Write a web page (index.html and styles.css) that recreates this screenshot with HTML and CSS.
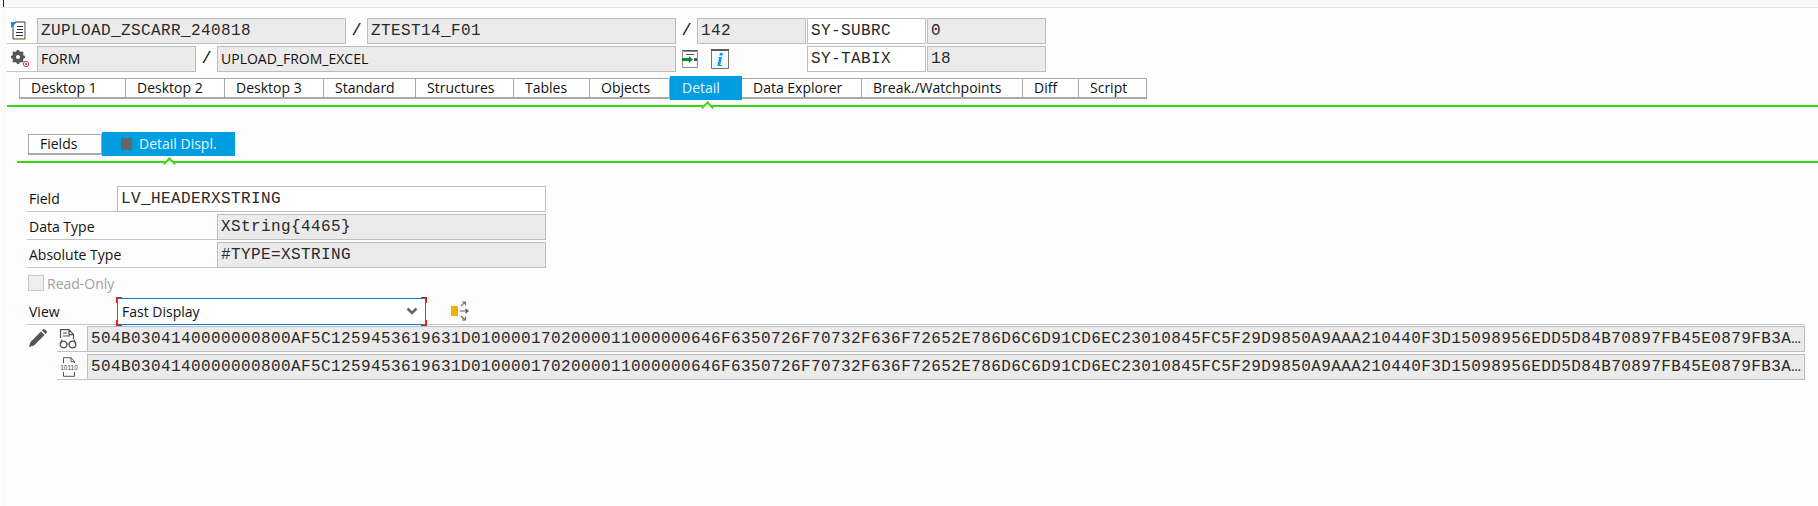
FILE: index.html
```html
<!DOCTYPE html>
<html lang="en">
<head>
<meta charset="utf-8">
<title>ABAP Debugger - Detail Display</title>
<link rel="stylesheet" href="styles.css">
</head>
<body>
<div class="strip"><span class="strip-mark"></span></div>
<main class="app">
  <div class="info-row">
    <div class="lead">
      <svg width="18" height="20" viewBox="0 0 18 20"><path d="M5 1h10v17H3V3z" fill="#fff" stroke="#3c3c3c"/><path d="M1 1h6L1 7z" fill="#1e88d8"/><path d="M7 5h6v1H7zM7 8h6v1H7zM6 11h7v1H6zM6 14h7v1H6z" fill="#333"/><path d="M3 18h12v1H3zM15 3h1v15h-1z" fill="#c9a57c"/></svg>
    </div>
    <div class="field w309 mono">ZUPLOAD_ZSCARR_240818</div>
    <div class="slash">/</div>
    <div class="field w309 mono">ZTEST14_F01</div>
    <div class="slash">/</div>
    <div class="field w109 mono">142</div>
    <div class="field white w119 gap-l mono">SY-SUBRC</div>
    <div class="field w119 gap-l mono">0</div>
  </div>
  <div class="info-row">
    <div class="lead">
      <svg width="20" height="20" viewBox="0 0 20 20"><circle cx="8" cy="8" r="4.2" fill="none" stroke="#555" stroke-width="3.4"/><path d="M8 1v14M1 8h14M3 3l10 10M13 3 3 13" stroke="#555" stroke-width="2.4"/><circle cx="8" cy="8" r="2" fill="#fff"/><circle cx="16" cy="15" r="2.6" fill="#fff" stroke="#e0303a"/><circle cx="16" cy="15" r="1" fill="#e0303a"/></svg>
    </div>
    <div class="field w159 sans">FORM</div>
    <div class="slash">/</div>
    <div class="field w459 sans">UPLOAD_FROM_EXCEL</div>
    <div class="tools">
      <svg width="18" height="20" viewBox="0 0 18 20"><path d="M1.500 2.500h15v16h-15z" fill="#fff" stroke="#9a8f84"/><path d="M1 1h16v1H1zM5 5h8v1H5z" fill="#555"/><path d="M1 9h7V7l4 3.500-4 3.500v-2H1z" fill="#0a8a3c"/><path d="M13 9h3v3h-3z" fill="#555"/></svg>
      <svg width="18" height="20" viewBox="0 0 18 20"><path d="M.5 1.500h17v18H.5z" fill="#f2f8fd" stroke="#7d7068"/><path d="M0 0h18v2H0z" fill="#5d5a58"/><path d="M9 4h3l-.5 2.500h-3zM8 8h3l-1.700 8H11v1H6.300l1.900-8H7z" fill="#0a9ae6"/></svg>
    </div>
    <div class="field white w119 mono">SY-TABIX</div>
    <div class="field w119 gap-l mono">18</div>
  </div>

  <nav class="tabs">
    <span class="tab t107">Desktop 1</span>
    <span class="tab t99">Desktop 2</span>
    <span class="tab t99">Desktop 3</span>
    <span class="tab t92">Standard</span>
    <span class="tab t98">Structures</span>
    <span class="tab t76">Tables</span>
    <span class="tab t80">Objects</span>
    <span class="tab active t72">Detail</span>
    <span class="tab t120">Data Explorer</span>
    <span class="tab t161">Break./Watchpoints</span>
    <span class="tab t56">Diff</span>
    <span class="tab t68">Script</span>
  </nav>

  <section class="detail">
    <nav class="tabs sub">
      <span class="tab t74">Fields</span>
      <span class="tab active t133"><i class="stop"></i>Detail Displ.</span>
    </nav>

    <div class="form">
      <div class="form-row">
        <label class="label l90">Field</label>
        <div class="field white grow mono">LV_HEADERXSTRING</div>
      </div>
      <div class="form-row">
        <label class="label l190">Data Type</label>
        <div class="field grow mono">XString{4465}</div>
      </div>
      <div class="form-row">
        <label class="label l190">Absolute Type</label>
        <div class="field grow mono">#TYPE=XSTRING</div>
      </div>
      <div class="check-row">
        <span class="check"></span><span>Read-Only</span>
      </div>
      <div class="view-row">
        <label class="view-label">View</label>
        <div class="select">
          <span>Fast Display</span>
          <svg width="12" height="8" viewBox="0 0 12 8"><path d="M1.500 1.500 6 6l4.500-4.500" fill="none" stroke="#666" stroke-width="2.600"/></svg>
          <i class="c tl"></i><i class="c tr"></i><i class="c bl"></i><i class="c br"></i>
        </div>
        <svg class="layout" width="18" height="20" viewBox="0 0 18 20"><path d="M0 5h7v10H0z" fill="#f4b000"/><path d="M9 10h8M14.500 8l2.500 2-2.500 2" fill="none" stroke="#555" stroke-width="1.200"/><path d="M10 5l4-4M11 1h3.500v3.500" fill="none" stroke="#5a7fa8" stroke-width="1.200"/><path d="M10 15l4 4M11 19h3.500v-3.500" fill="none" stroke="#7a6a55" stroke-width="1.200"/></svg>
      </div>
    </div>

    <div class="values">
      <div class="pencil">
        <svg width="18" height="18" viewBox="0 0 18 18"><path d="M0 18l1.500-5L12 2.500l3.500 3.500L5 16.500z" fill="#555"/><path d="M13 1.500l1-1a1.500 1.500 0 0 1 2 0l1.500 1.500a1.500 1.500 0 0 1 0 2l-1 1z" fill="#555"/></svg>
      </div>
      <div class="value-rows">
        <div class="value-row">
          <div class="value-icon">
            <svg width="18" height="20" viewBox="0 0 18 20"><path d="M1.500 9V.7H10l4.500 4.800V10M10 .7v5h4.500M4 4h4M4 7h7" fill="none" stroke="#555" stroke-width="1.200"/><circle cx="4.500" cy="15.500" r="3.300" fill="none" stroke="#555" stroke-width="1.300"/><circle cx="13.500" cy="15.500" r="3.300" fill="none" stroke="#555" stroke-width="1.300"/><path d="M7.800 15h2.400M1.500 15 3 10.500M16.500 15 15 10.500" fill="none" stroke="#555" stroke-width="1.100"/></svg>
          </div>
          <div class="field grow mono">504B0304140000000800AF5C1259453619631D0100001702000011000000646F6350726F70732F636F72652E786D6C6D91CD6EC23010845FC5F29D9850A9AAA210440F3D15098956EDD5D84B70897FB45E0879FB3A…</div>
        </div>
        <div class="value-row">
          <div class="value-icon">
            <svg width="20" height="20" viewBox="0 0 20 20"><path d="M4.500 6V.7H12l3.500 3.800V6M12 .7v4h3.500M4.500 15v4.300h11V15" fill="none" stroke="#555" stroke-width="1"/><text x="10" y="13" class="bits">10110</text></svg>
          </div>
          <div class="field grow mono">504B0304140000000800AF5C1259453619631D0100001702000011000000646F6350726F70732F636F72652E786D6C6D91CD6EC23010845FC5F29D9850A9AAA210440F3D15098956EDD5D84B70897FB45E0879FB3A…</div>
        </div>
      </div>
    </div>
  </section>
</main>
</body>
</html>
```
FILE: styles.css
```css
* { box-sizing: border-box; }
html, body { margin: 0; height: 100%; }
body {
  background: linear-gradient(to right, #f9fbf9 7px, #fdfdfd 7px);
  color: #111;
  font-family: "Open Sans", "Noto Sans", sans-serif;
  font-size: 14px;
  overflow: hidden;
}
.strip {
  height: 8px;
  background: #f9f9f9;
  border-bottom: 1px solid #e3e3e3;
  padding-left: 3px;
}
.strip-mark { display: block; width: 1px; height: 7px; background: #222; }
.app { padding: 10px 0 0 7px; }

.mono {
  font-family: "Liberation Mono", "DejaVu Sans Mono", monospace;
  font-size: 16px;
  letter-spacing: 0.4px;
  color: #2a2a2a;
}
.sans { font-family: "Open Sans", "Noto Sans", sans-serif; font-size: 14px; color: #111; }

.info-row { display: flex; height: 26px; margin-bottom: 2px; }
.lead {
  width: 30px;
  border-bottom: 1px solid #c4c4c4;
  display: flex;
  align-items: center;
  padding-left: 3px;
}
.field {
  height: 26px;
  line-height: 24px;
  padding: 0 3px;
  background: #ebebeb;
  border: 1px solid #bdbdbd;
  white-space: nowrap;
  overflow: hidden;
  flex: none;
}
.field.white { background: #fff; }
.field.grow { flex: 1; min-width: 0; }
.w109 { width: 109px; }
.w119 { width: 119px; }
.w159 { width: 159px; }
.w309 { width: 309px; }
.w459 { width: 459px; }
.gap-l { margin-left: 1px; }
.slash {
  width: 21px;
  text-align: center;
  font-family: "Liberation Mono", monospace;
  font-size: 17px;
  line-height: 25px;
}
.tools {
  width: 131px;
  display: flex;
  gap: 12px;
  align-items: center;
  padding-left: 5px;
}

.tabs {
  display: flex;
  align-items: flex-start;
  height: 31px;
  margin-top: 4px;
  padding-left: 12px;
  border-bottom: 2px solid #39d611;
}
.tab {
  position: relative;
  flex: none;
  height: 21px;
  margin-top: 2px;
  padding-left: 11px;
  line-height: 18px;
  background: #fff;
  border: 1px solid #a9a9a9;
  border-bottom-width: 2px;
  border-left-width: 0;
  color: #111;
  white-space: nowrap;
}
.tab:first-child { border-left-width: 1px; }
.tab.active {
  height: 24px;
  margin-top: 0;
  padding-left: 12px;
  line-height: 24px;
  border: 0;
  background: #009de0;
  color: #e6f5fd;
}
.tab.active::after {
  content: "";
  position: absolute;
  left: 50%;
  top: 26.500px;
  width: 7px;
  height: 7px;
  margin-left: -3.500px;
  background: #fdfdfd;
  border-top: 2px solid #39d611;
  border-left: 2px solid #39d611;
  transform: rotate(45deg);
}
.t56 { width: 56px; } .t68 { width: 68px; } .t72 { width: 72px; } .t74 { width: 74px; }
.t76 { width: 76px; } .t80 { width: 80px; } .t92 { width: 92px; } .t98 { width: 98px; }
.t99 { width: 99px; } .t107 { width: 107px; } .t120 { width: 120px; } .t133 { width: 133px; }
.t161 { width: 161px; }

.detail { padding-top: 25px; }
.tabs.sub {
  margin-top: 0;
  margin-left: 10px;
  padding-left: 11px;
  height: 31px;
}
.tabs.sub .tab.active { padding-left: 19px; display: flex; align-items: center; }
.stop { width: 11px; height: 12px; background: #666; margin-right: 7px; flex: none; }

.form { width: 519px; margin: 23px 0 0 20px; position: relative; z-index: 1; }
.form-row { display: flex; height: 26px; margin-bottom: 2px; }
.label {
  flex: none;
  padding: 2px 0 0 2px;
  line-height: 22px;
  border-bottom: 1px solid #c4c4c4;
}
.l90 { width: 90px; }
.l190 { width: 190px; }
.check-row {
  display: flex;
  align-items: center;
  height: 26px;
  padding-left: 1px;
  margin-bottom: 2px;
  color: #a2a2a2;
}
.check {
  width: 16px;
  height: 16px;
  margin-right: 3px;
  background: #edf0f2;
  border: 1px solid #c9c9c9;
}
.view-row { display: flex; align-items: center; width: 1778px; height: 27px; border-bottom: 1px solid #c4c4c4; }
.view-label { width: 90px; padding-left: 2px; }
.select {
  position: relative;
  display: flex;
  align-items: center;
  justify-content: space-between;
  width: 309px;
  height: 27px;
  padding: 0 7px 0 4px;
  background: #fff;
  border: 1px solid #0a7abf;
  color: #111;
}
.c { position: absolute; width: 6px; height: 6px; border: 0 solid #e02020; }
.tl { left: -2px; top: -2px; border-width: 1px 0 0 1px; }
.tr { right: -2px; top: -2px; border-width: 1px 1px 0 0; }
.bl { left: -2px; bottom: -2px; border-width: 0 0 1px 1px; }
.br { right: -2px; bottom: -2px; border-width: 0 1px 1px 0; }
.layout { margin-left: 25px; }

.values { display: flex; margin: 1px 0 0 20px; }
.pencil { width: 30px; padding: 3px 0 0 2px; flex: none; }
.value-rows { width: 1748px; flex: none; }
.value-row { display: flex; height: 26px; margin-bottom: 2px; }
.value-icon {
  width: 30px;
  flex: none;
  padding: 3px 0 0 2px;
  border-bottom: 1px solid #c4c4c4;
}
.bits { font-family: "Liberation Sans", sans-serif; font-size: 6.500px; text-anchor: middle; fill: #444; }
svg { display: block; flex: none; }
```
